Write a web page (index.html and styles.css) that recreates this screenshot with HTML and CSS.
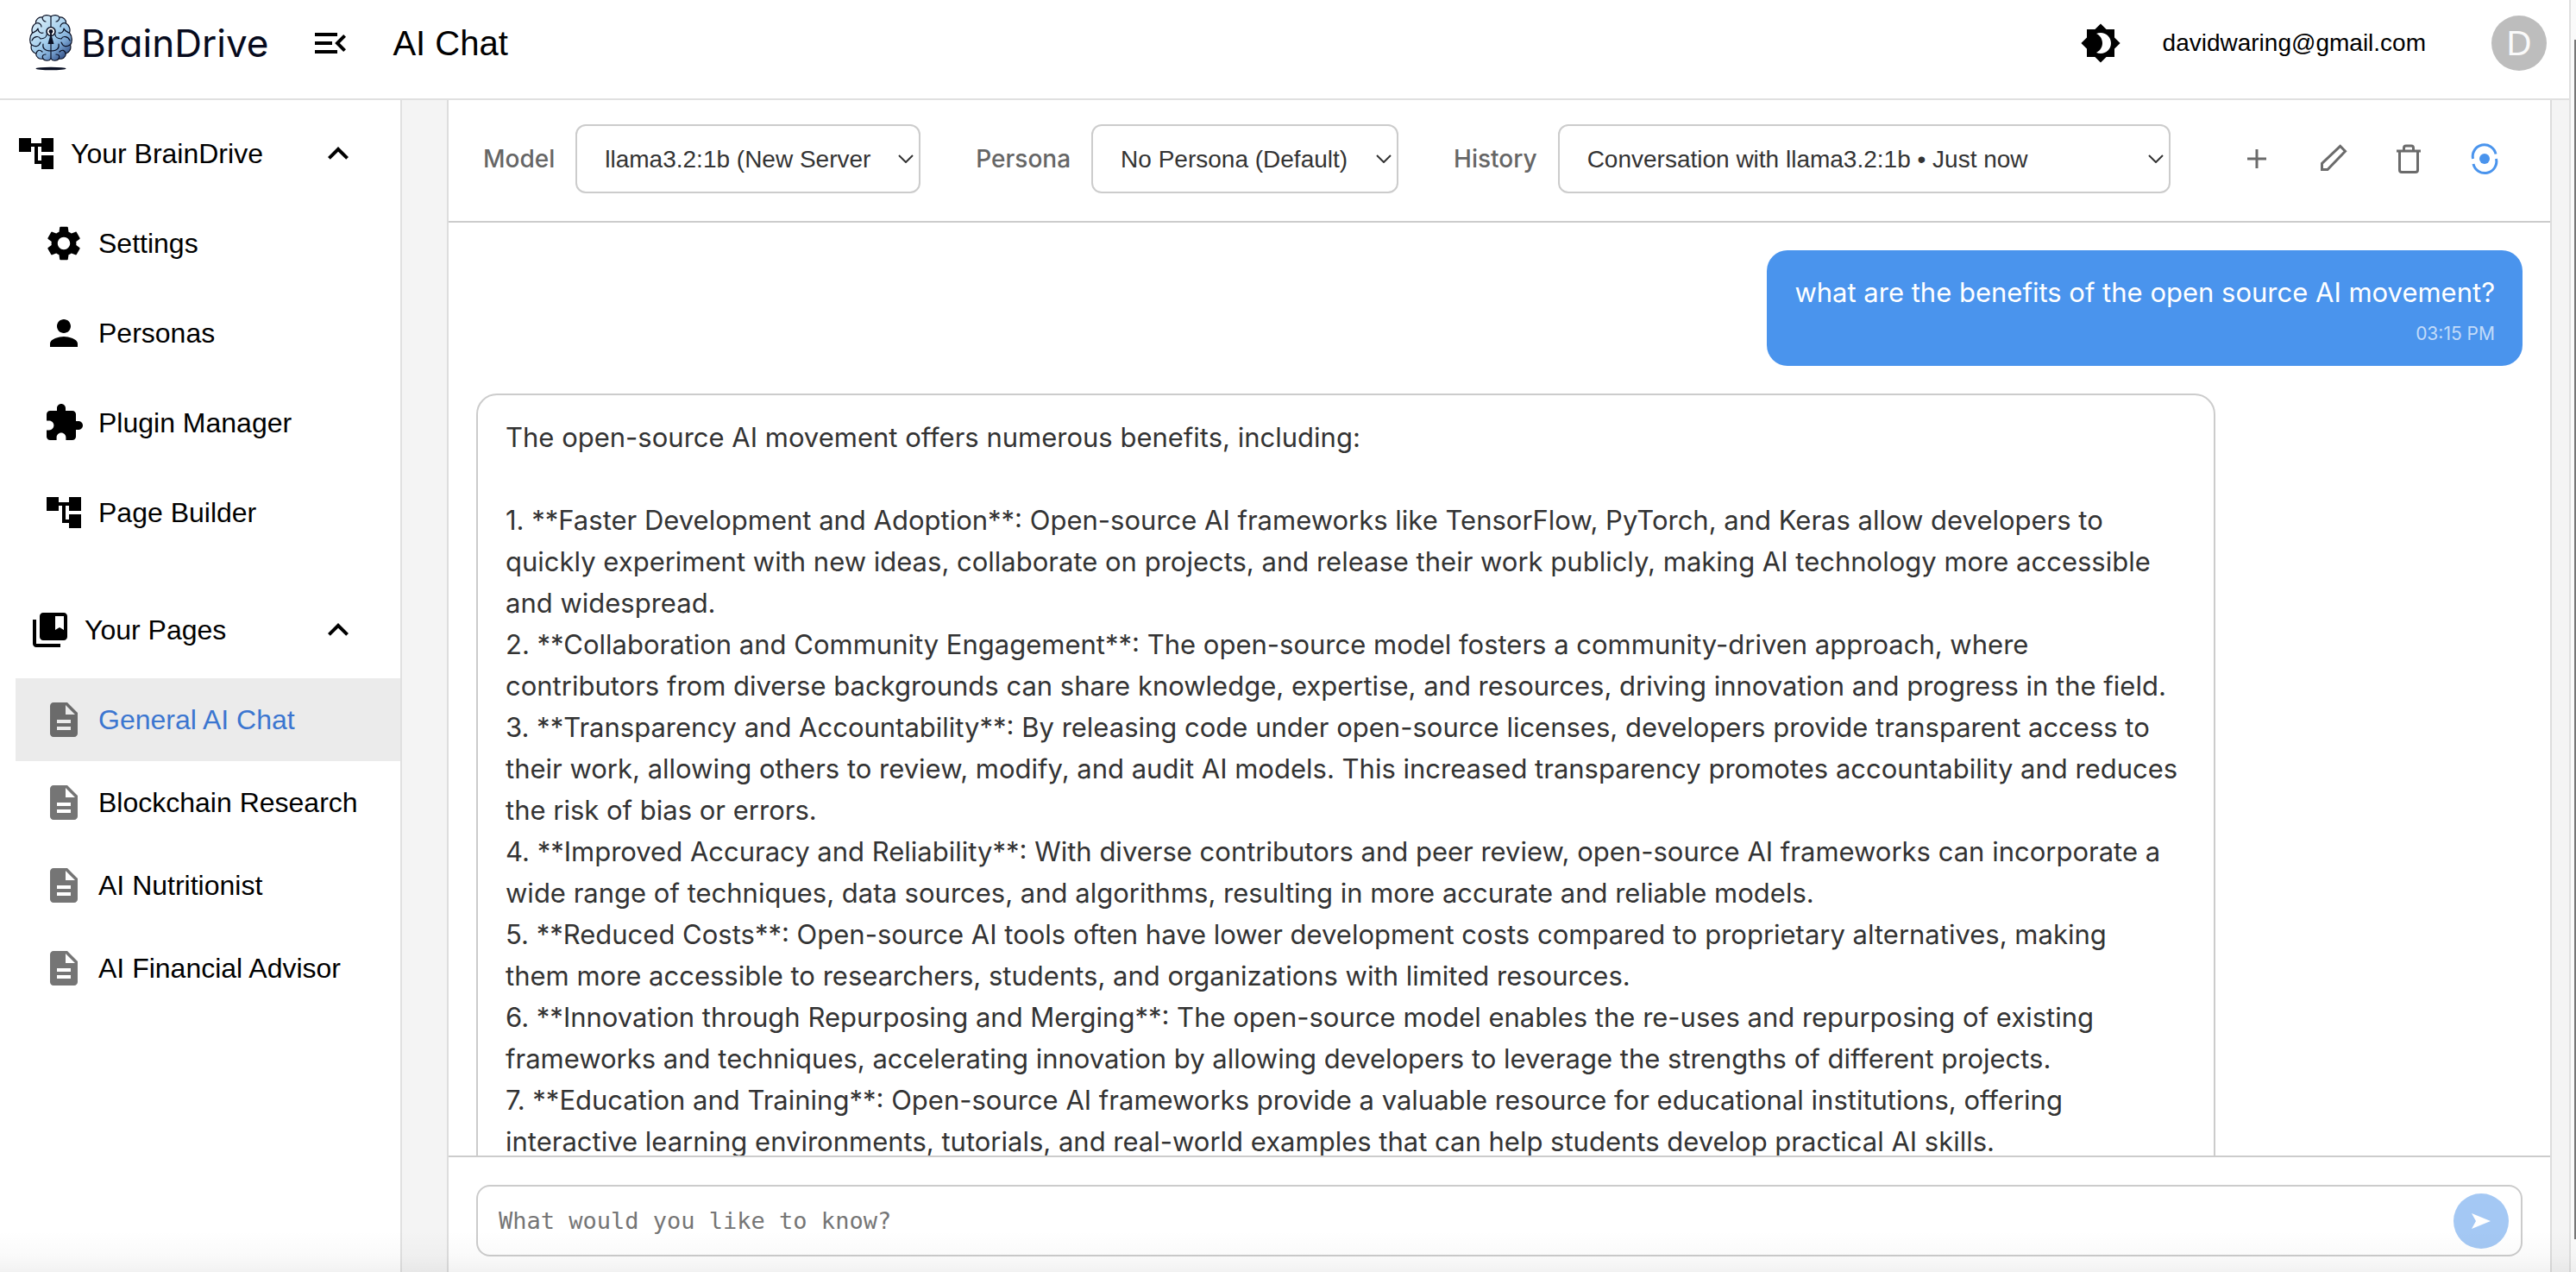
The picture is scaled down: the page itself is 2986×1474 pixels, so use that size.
FILE: index.html
```html
<!DOCTYPE html>
<html lang="en">
<head>
<meta charset="utf-8">
<title>BrainDrive - AI Chat</title>
<link rel="stylesheet" href="styles.css">
</head>
<body>
<div class="app">
  <header class="topbar">
    <a class="logo" href="#">
      <svg class="logo-mark" viewBox="0 0 50 66" aria-hidden="true">
        <defs>
          <linearGradient id="brain" x1="0.1" y1="0" x2="0.9" y2="1">
            <stop offset="0" stop-color="#e2f3fb"/>
            <stop offset="0.5" stop-color="#a3cdec"/>
            <stop offset="0.7" stop-color="#7ba6d3"/>
            <stop offset="1" stop-color="#1c3570"/>
          </linearGradient>
        </defs>
        <g fill="none" stroke="#0a1024" stroke-width="1.2" stroke-linecap="round" stroke-linejoin="round">
          <path fill="url(#brain)" d="M25 2C22 0 17 0 15 3C11 2 7 6 7.500 10C4 12 2 17 3.500 21C0 25 0 32 2.500 35C1 40 4 44 7.500 45C8 50 12 52 15.500 51C18 54 23 54 25 51C27 54 32 54 34.500 51C38 52 42 50 42.500 45C46 44 49 40 47.500 35C50 32 50 25 46.500 21C48 17 46 12 42.500 10C43 6 39 2 35 3C33 0 28 0 25 2Z"/>
          <path d="M25 2V14M25 34V51M15 3C15 6 17 8 19 8M35 3C35 6 33 8 31 8M8 10C11 9 14 11 14 14M42 10C39 9 36 11 36 14M4 21C6 20 9 19 10 16M46 21C44 20 41 19 40 16M10 16C10 20 13 22 16 21M40 16C40 20 37 22 34 21M3 30C5 25 11 24 13 28C17 28 20 26 20 23M47 30C45 25 39 24 37 28C33 28 30 26 30 23M3 35C7 38 11 37 13 32M47 35C43 38 39 37 37 32M16 34C15 39 18 42 25 42C32 42 35 39 34 34M8 45C9 41 12 40 15 43M42 45C41 41 38 40 35 43M16 51C14 48 16 46 19 46M34 51C36 48 34 46 31 46"/>
        </g>
        <circle cx="25" cy="19.500" r="5" fill="#fff" stroke="#0a1024" stroke-width="1.600"/>
        <circle cx="25" cy="19.500" r="2.400" fill="#0a1024"/>
        <path d="M24 21H26V25L28.500 34H21.500L24 25Z" fill="#0a1024"/>
        <ellipse cx="25" cy="62.500" rx="17.500" ry="1.700" fill="#0a1024"/>
      </svg>
      <span class="logo-name">BrainDrive</span>
    </a>
    <button class="icon-button menu-toggle" aria-label="Collapse menu">
      <svg class="icon" viewBox="0 0 24 24"><path d="M3 18h13v-2H3v2zm0-5h10v-2H3v2zm0-7v2h13V6H3zm18 9.590L17.420 12 21 8.410 19.590 7l-5 5 5 5L21 15.590z"/></svg>
    </button>
    <h1 class="page-title">AI Chat</h1>
    <div class="account">
      <button class="icon-button" aria-label="Toggle theme">
        <svg class="icon" viewBox="0 0 24 24"><path d="M20 8.690V4h-4.690L12 .690 8.690 4H4v4.690L.690 12 4 15.310V20h4.690L12 23.310 15.310 20H20v-4.690L23.310 12 20 8.690zM12 18c-.890 0-1.740-.200-2.500-.550C11.560 16.500 13 14.420 13 12s-1.440-4.500-3.500-5.450C10.260 6.200 11.110 6 12 6c3.310 0 6 2.690 6 6s-2.690 6-6 6z"/></svg>
      </button>
      <span class="email">davidwaring@gmail.com</span>
      <button class="avatar" aria-label="Account">D</button>
    </div>
  </header>

  <div class="body">
    <nav class="sidebar">
      <button class="group">
        <svg class="icon" viewBox="0 0 24 24"><path d="M22 11V3h-7v3H9V3H2v8h7V8h2v10h4v3h7v-8h-7v3h-2V8h2v3z"/></svg>
        <span class="group-name">Your BrainDrive</span>
        <svg class="icon caret" viewBox="0 0 24 24"><path d="m12 8-6 6 1.410 1.410L12 10.830l4.590 4.580L18 14z"/></svg>
      </button>
      <div class="links tools">
        <a class="link" href="#">
          <svg class="icon" viewBox="0 0 24 24"><path d="M19.140 12.940c.040-.300.060-.610.060-.940 0-.320-.020-.640-.070-.940l2.030-1.580c.180-.140.230-.410.120-.610l-1.920-3.320c-.120-.220-.370-.290-.590-.220l-2.390.960c-.500-.380-1.030-.700-1.620-.940l-.360-2.540c-.040-.240-.240-.410-.480-.410h-3.840c-.240 0-.430.170-.470.410l-.360 2.540c-.590.240-1.130.570-1.620.940l-2.390-.960c-.220-.080-.470 0-.590.220L2.740 8.870c-.120.210-.080.470.120.610l2.030 1.580c-.050.300-.090.630-.090.940s.020.640.070.940l-2.030 1.580c-.180.140-.230.410-.120.610l1.920 3.320c.120.220.370.290.590.220l2.390-.960c.500.380 1.030.700 1.620.940l.360 2.540c.050.240.240.410.480.410h3.840c.240 0 .440-.170.470-.410l.360-2.540c.590-.240 1.130-.560 1.620-.940l2.390.960c.220.080.470 0 .590-.220l1.920-3.320c.120-.220.070-.470-.120-.610zM12 15.600c-1.980 0-3.600-1.620-3.600-3.600s1.620-3.600 3.600-3.600 3.600 1.620 3.600 3.600-1.620 3.600-3.600 3.600"/></svg>
          <span>Settings</span>
        </a>
        <a class="link" href="#">
          <svg class="icon" viewBox="0 0 24 24"><path d="M12 12c2.210 0 4-1.790 4-4s-1.790-4-4-4-4 1.790-4 4 1.790 4 4 4m0 2c-2.670 0-8 1.340-8 4v2h16v-2c0-2.660-5.330-4-8-4"/></svg>
          <span>Personas</span>
        </a>
        <a class="link" href="#">
          <svg class="icon" viewBox="0 0 24 24"><path d="M20.500 11H19V7c0-1.100-.900-2-2-2h-4V3.500C13 2.120 11.880 1 10.500 1S8 2.120 8 3.500V5H4c-1.100 0-1.990.900-1.990 2v3.800H3.500c1.490 0 2.700 1.210 2.700 2.700s-1.210 2.700-2.700 2.700H2V20c0 1.100.900 2 2 2h3.800v-1.500c0-1.490 1.210-2.700 2.700-2.700s2.700 1.210 2.700 2.700V22H17c1.100 0 2-.900 2-2v-4h1.500c1.380 0 2.500-1.120 2.500-2.500S21.880 11 20.500 11"/></svg>
          <span>Plugin Manager</span>
        </a>
        <a class="link" href="#">
          <svg class="icon" viewBox="0 0 24 24"><path d="M22 11V3h-7v3H9V3H2v8h7V8h2v10h4v3h7v-8h-7v3h-2V8h2v3z"/></svg>
          <span>Page Builder</span>
        </a>
      </div>
      <button class="group pages-group">
        <svg class="icon" viewBox="0 0 24 24"><path d="M4 6H2v14c0 1.100.900 2 2 2h14v-2H4z"/><path d="M20 2H8c-1.100 0-2 .900-2 2v12c0 1.100.900 2 2 2h12c1.100 0 2-.900 2-2V4c0-1.100-.900-2-2-2m0 10-2.500-1.500L15 12V4h5z"/></svg>
        <span class="group-name">Your Pages</span>
        <svg class="icon caret" viewBox="0 0 24 24"><path d="m12 8-6 6 1.410 1.410L12 10.830l4.590 4.580L18 14z"/></svg>
      </button>
      <div class="links pages">
        <a class="link selected" href="#" aria-current="page">
          <svg class="icon" viewBox="0 0 24 24"><path d="M14 2H6c-1.100 0-1.990.900-1.990 2L4 20c0 1.100.890 2 1.990 2H18c1.100 0 2-.900 2-2V8zm2 16H8v-2h8zm0-4H8v-2h8zm-3-5V3.500L18.500 9z"/></svg>
          <span>General AI Chat</span>
        </a>
        <a class="link" href="#">
          <svg class="icon" viewBox="0 0 24 24"><path d="M14 2H6c-1.100 0-1.990.900-1.990 2L4 20c0 1.100.890 2 1.990 2H18c1.100 0 2-.900 2-2V8zm2 16H8v-2h8zm0-4H8v-2h8zm-3-5V3.500L18.500 9z"/></svg>
          <span>Blockchain Research</span>
        </a>
        <a class="link" href="#">
          <svg class="icon" viewBox="0 0 24 24"><path d="M14 2H6c-1.100 0-1.990.900-1.990 2L4 20c0 1.100.890 2 1.990 2H18c1.100 0 2-.900 2-2V8zm2 16H8v-2h8zm0-4H8v-2h8zm-3-5V3.500L18.500 9z"/></svg>
          <span>AI Nutritionist</span>
        </a>
        <a class="link" href="#">
          <svg class="icon" viewBox="0 0 24 24"><path d="M14 2H6c-1.100 0-1.990.900-1.990 2L4 20c0 1.100.890 2 1.990 2H18c1.100 0 2-.900 2-2V8zm2 16H8v-2h8zm0-4H8v-2h8zm-3-5V3.500L18.500 9z"/></svg>
          <span>AI Financial Advisor</span>
        </a>
      </div>
    </nav>

    <main class="content">
      <section class="panel">
        <div class="toolbar">
          <div class="field">
            <label for="model">Model</label>
            <div class="select model">
              <select id="model"><option>llama3.2:1b (New Server</option></select>
              <svg class="chevron" viewBox="0 0 18 10"><path d="M1 1l8 8 8-8"/></svg>
            </div>
          </div>
          <div class="field">
            <label for="persona">Persona</label>
            <div class="select persona">
              <select id="persona"><option>No Persona (Default)</option></select>
              <svg class="chevron" viewBox="0 0 18 10"><path d="M1 1l8 8 8-8"/></svg>
            </div>
          </div>
          <div class="field">
            <label for="history">History</label>
            <div class="select history">
              <select id="history"><option>Conversation with llama3.2:1b • Just now</option></select>
              <svg class="chevron" viewBox="0 0 18 10"><path d="M1 1l8 8 8-8"/></svg>
            </div>
          </div>
          <div class="actions">
            <button class="action" aria-label="New chat"><svg viewBox="0 0 40 40"><path d="M20 9v22M9 20h22"/></svg></button>
            <button class="action" aria-label="Rename"><svg viewBox="0 0 40 40"><path d="M7.500 32.500V25.500L28.700 5.300L34.500 11.300L14 32.500z"/></svg></button>
            <button class="action" aria-label="Delete"><svg viewBox="0 0 40 40"><path d="M6 11h28M9.500 11v22a2.500 2.500 0 0 0 2.500 2.500h16a2.500 2.500 0 0 0 2.500-2.500V11M14.500 11V7.500a2.500 2.500 0 0 1 2.500-2.500h6a2.500 2.500 0 0 1 2.500 2.500v3.500"/></svg></button>
            <button class="action live" aria-label="Auto scroll"><svg viewBox="0 0 40 40"><path d="M6.500 20A13.500 13.500 0 0 1 33 14.500M33.500 20A13.500 13.500 0 0 1 7 26"/><circle cx="20" cy="20" r="6"/></svg></button>
          </div>
        </div>

        <div class="messages">
          <article class="message user">
            <p>what are the benefits of the open source AI movement?</p>
            <time>03:15 PM</time>
          </article>
          <article class="message assistant">
            <p>The open-source AI movement offers numerous benefits, including:</p>
            <ol class="points">
              <li>1. **Faster Development and Adoption**: Open-source AI frameworks like TensorFlow, PyTorch, and Keras allow developers to quickly experiment with new ideas, collaborate on projects, and release their work publicly, making AI technology more accessible and widespread.</li>
              <li>2. **Collaboration and Community Engagement**: The open-source model fosters a community-driven approach, where contributors from diverse backgrounds can share knowledge, expertise, and resources, driving innovation and progress in the field.</li>
              <li>3. **Transparency and Accountability**: By releasing code under open-source licenses, developers provide transparent access to their work, allowing others to review, modify, and audit AI models. This increased transparency promotes accountability and reduces the risk of bias or errors.</li>
              <li>4. **Improved Accuracy and Reliability**: With diverse contributors and peer review, open-source AI frameworks can incorporate a wide range of techniques, data sources, and algorithms, resulting in more accurate and reliable models.</li>
              <li>5. **Reduced Costs**: Open-source AI tools often have lower development costs compared to proprietary alternatives, making<br>them more accessible to researchers, students, and organizations with limited resources.</li>
              <li>6. **Innovation through Repurposing and Merging**: The open-source model enables the re-uses and repurposing of existing frameworks and techniques, accelerating innovation by allowing developers to leverage the strengths of different projects.</li>
              <li>7. **Education and Training**: Open-source AI frameworks provide a valuable resource for educational institutions, offering interactive learning environments, tutorials, and real-world examples that can help students develop practical AI skills.</li>
            </ol>
          </article>
        </div>

        <form class="composer">
          <div class="composer-box">
            <textarea rows="1" aria-label="Message" placeholder="What would you like to know?"></textarea>
            <button class="send" type="button" aria-label="Send"><svg viewBox="0 0 24 20"><path d="M1 1l22 9-22 9 5-9z"/></svg></button>
          </div>
        </form>
      </section>
    </main>
  </div>
</div>
<div class="scrollbar"><div class="thumb"></div></div>
</body>
</html>
```
FILE: styles.css
```css
* { box-sizing: border-box; }

body {
  margin: 0;
  height: 100vh;
  display: flex;
  position: relative;
  overflow: hidden;
  background: #fff;
  color: #000;
  font-family: "Liberation Sans", Arial, sans-serif;
  font-size: 32px;
}

/* Soft shade along the bottom edge of the window */
body::after {
  content: "";
  position: absolute;
  inset: auto 0 0;
  height: 48px;
  background: linear-gradient(rgba(0, 0, 0, 0), rgba(0, 0, 0, 0.02) 60%, rgba(0, 0, 0, 0.05));
  pointer-events: none;
}

button {
  margin: 0;
  padding: 0;
  border: 0;
  background: none;
  color: inherit;
  font: inherit;
  cursor: pointer;
}

a { color: inherit; text-decoration: none; }

.icon { width: 48px; height: 48px; fill: currentColor; flex: none; display: block; }

.app { flex: 1; min-width: 0; display: flex; flex-direction: column; }

/* Top bar */
.topbar {
  height: 116px;
  flex: none;
  display: flex;
  align-items: center;
  padding: 0 26px 14px 34px;
  border-bottom: 2px solid #e0e0e0;
}
.logo { display: flex; align-items: center; gap: 10px; color: #060a1c; }
.logo-mark { width: 50px; height: 66px; }
.logo-name {
  font-family: Inter, sans-serif;
  font-size: 44px;
  line-height: 56px;
  font-feature-settings: "cv11";
}
.menu-toggle { margin-left: 48px; }
.page-title { margin: 0 0 0 48px; font-size: 40px; font-weight: 400; line-height: 48px; }
.account { margin-left: auto; display: flex; align-items: center; }
.email { margin: 0 76px 0 48px; font-size: 28px; }
.avatar {
  width: 64px;
  height: 64px;
  border-radius: 50%;
  background: #bdbdbd;
  color: #fafafa;
  font-size: 40px;
}

/* Sidebar */
.body { flex: 1; min-height: 0; display: flex; }
.sidebar {
  width: 466px;
  flex: none;
  padding-top: 16px;
  border-right: 2px solid #e0e0e0;
}
.group { display: flex; align-items: center; width: 100%; height: 92px; padding: 0 48px 0 18px; }
.group-name { margin-left: 16px; }
.group .caret { margin-left: auto; }
.pages-group { padding-left: 34px; margin-top: 42px; }
.link { display: flex; align-items: center; gap: 16px; height: 96px; margin-left: 18px; padding-left: 32px; }
.links { display: grid; padding-top: 10px; }
.tools { gap: 8px; }
.pages .icon { color: #757575; }
.selected { background: #ebebeb; color: #3b76d0; }
.pages .selected .icon { color: #6b6b6b; }

/* Chat panel */
.content { flex: 1; min-width: 0; display: flex; background: #f4f4f4; padding: 0 20px 0 52px; }
.panel {
  flex: 1;
  min-width: 0;
  display: flex;
  flex-direction: column;
  background: #fff;
  border: solid #ddd;
  border-width: 0 2px;
}
.toolbar {
  flex: none;
  display: flex;
  align-items: center;
  gap: 64px;
  height: 142px;
  padding: 0 56px 4px 40px;
  border-bottom: 2px solid #ccc;
}
.field { display: flex; align-items: center; gap: 24px; }
.field label { font-family: Inter, sans-serif; font-size: 28px; font-weight: 500; color: #666; }
.select { display: flex; align-items: center; position: relative; }
.select select {
  appearance: none;
  width: 100%;
  height: 80px;
  padding: 0 32px;
  border: 2px solid #ccc;
  border-radius: 12px;
  background: #fff;
  color: #333;
  font: 28px "Liberation Sans", Arial, sans-serif;
}
.model { width: 400px; }
.persona { width: 356px; }
.history { width: 710px; }
.chevron {
  position: absolute;
  right: 8px;
  width: 18px;
  height: 10px;
  fill: none;
  stroke: #333;
  stroke-width: 2;
  pointer-events: none;
}
.actions { display: flex; gap: 48px; margin-left: auto; }
.action { width: 40px; height: 40px; color: #6b6b6b; }
.action svg {
  display: block;
  width: 40px;
  height: 40px;
  fill: none;
  stroke: currentColor;
  stroke-width: 3;
}
.live { color: #4a94ed; }
.live circle { fill: currentColor; stroke: none; }

/* Messages */
.messages {
  flex: 1;
  min-height: 0;
  overflow: hidden;
  display: flex;
  flex-direction: column;
  gap: 32px;
  padding: 32px;
  font-family: Inter, sans-serif;
  font-size: 31px;
  line-height: 48px;
}
.message { flex: none; max-width: 85%; padding: 25px 32px; border-radius: 24px; }
.message p { margin: 0; }
.user { align-self: flex-end; padding-bottom: 21px; background: #4a94ed; color: #fff; }
.user time { display: block; margin-top: 8px; text-align: right; font-size: 21px; line-height: 32px; color: #c2dbf9; }
.assistant { align-self: flex-start; border: 2px solid #ccc; color: #333; }
.points { list-style: none; margin: 48px 0 0; padding: 0; }

/* Composer */
.composer {
  flex: none;
  padding: 32px 32px 18px;
  border-top: 2px solid #ccc;
}
.composer-box {
  display: flex;
  align-items: center;
  height: 83px;
  padding: 0 14px 0 24px;
  border: 2px solid #ccc;
  border-radius: 16px;
}
.composer textarea {
  flex: 1;
  height: 36px;
  padding: 0;
  border: 0;
  outline: 0;
  resize: none;
  background: none;
  font: 27px/36px "DejaVu Sans Mono", monospace;
}
.composer textarea::placeholder { color: #757575; }
.send {
  display: grid;
  place-items: center;
  width: 64px;
  height: 64px;
  border-radius: 50%;
  background: #a4c8f4;
}
.send svg { width: 24px; height: 20px; fill: #fff; }

/* Window scrollbar */
.scrollbar {
  width: 8px;
  flex: none;
  display: flex;
  justify-content: flex-end;
  padding: 46px 0 38px;
  border-left: 2px solid #e0e0e0;
  background: #fafafa;
}
.thumb { width: 2px; background: #777; }
```
